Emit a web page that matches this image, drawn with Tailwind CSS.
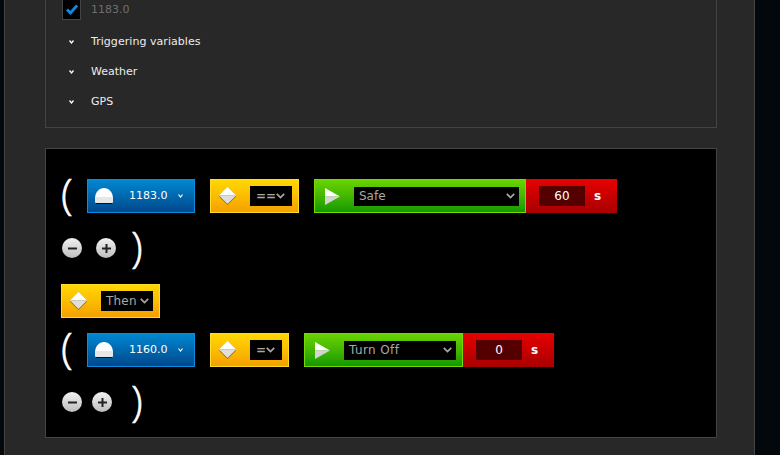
<!DOCTYPE html>
<html lang="en">
<head>
    <meta charset="UTF-8">
    <title>Rule editor</title>
    <script src="https://cdn.jsdelivr.net/npm/@tailwindcss/browser@4"></script>
</head>
<body class="bg-[#03080c] h-[455px] w-[780px] overflow-hidden font-['DejaVu_Sans',sans-serif] text-[11px]">
    <div class="ml-[4px] w-[751px] h-[455px] bg-[#282828] border-x border-[#444444] pl-[40px] overflow-hidden">

        <!-- Variables list -->
        <div class="w-[672px] h-[128px] border border-t-0 border-[#444444] pl-[16px]">
            <div class="h-[27px] flex items-start">
                <div class="w-[19px] h-[20px] bg-black border border-[#444444] border-t-0 flex items-center justify-center">
                    <svg width="12" height="11" viewBox="0 0 12 11"><path d="M1 5.5 L4.5 9 L11 1.5" fill="none" stroke="#0f8ae0" stroke-width="2.8"/></svg>
                </div>
                <span class="ml-[10px] mt-[2px] text-[#6f6f6f]">1183.0</span>
            </div>
            <div class="h-[30px] flex items-center text-[#ececec]">
                <svg class="ml-[7px] mr-[17px]" width="5" height="4" viewBox="0 0 5 4"><path d="M0.5 0.5 L2.5 3 L4.5 0.5" fill="none" stroke="#fff" stroke-width="1.3"/></svg>
                <span class="tracking-[0.05px]">Triggering variables</span>
            </div>
            <div class="h-[30px] flex items-center text-[#ececec]">
                <svg class="ml-[7px] mr-[17px]" width="5" height="4" viewBox="0 0 5 4"><path d="M0.5 0.5 L2.5 3 L4.5 0.5" fill="none" stroke="#fff" stroke-width="1.3"/></svg>
                <span>Weather</span>
            </div>
            <div class="h-[30px] flex items-center text-[#ececec]">
                <svg class="ml-[7px] mr-[17px]" width="5" height="4" viewBox="0 0 5 4"><path d="M0.5 0.5 L2.5 3 L4.5 0.5" fill="none" stroke="#fff" stroke-width="1.3"/></svg>
                <span>GPS</span>
            </div>
        </div>

        <!-- Rule canvas -->
        <div class="mt-[20px] w-[672px] h-[290px] bg-black border border-[#444444] pl-[15px] pt-[30px]">

            <!-- Condition 1 -->
            <div class="flex items-center h-[34px]">
                <span class="w-[26px] -translate-y-[3px] font-['Open_Sans',sans-serif] font-light text-[43px] leading-[34px] text-white [-webkit-text-stroke:0.6px_white]">(</span>
                <div class="w-[108px] h-[34px] border border-[#0a8ce0] bg-gradient-to-b from-[#0088d2] to-[#00488c] flex items-center text-white">
                    <svg class="ml-[7px]" width="18" height="17" viewBox="0 0 18 17"><path d="M0 11 C0 4 4 0 9 0 C14 0 18 4 18 11 Z" fill="#fff"/><path d="M0 9 H18 V14 Q18 15 17 15 H1 Q0 15 0 14 Z" fill="#e6e6e6"/><path d="M1 15.5 H17" stroke="#111" stroke-width="1"/></svg>
                    <span class="ml-[16px]">1183.0</span>
                    <svg class="ml-[10px]" width="5" height="4" viewBox="0 0 5 4"><path d="M0.5 0.5 L2.5 3 L4.5 0.5" fill="none" stroke="#fff" stroke-width="1.2"/></svg>
                </div>
                <div class="ml-[15px] w-[89px] h-[34px] border border-[#ffdc28] bg-gradient-to-b from-[#ffd800] to-[#f5a000] flex items-center">
                    <svg class="ml-[8px]" width="17" height="18" viewBox="0 0 17 18"><path d="M8.5 1 L17 9.5 L8.5 18 L0 9.5 Z" fill="#8a6a10"/><path d="M8.5 0 L17 8.5 H0 Z" fill="#fff"/><path d="M0 8.5 H17 L8.5 17 Z" fill="#dedede"/></svg>
                    <div class="ml-[14px] w-[42px] h-[20px] bg-black text-[#a8a8a8] font-bold flex items-center pl-[6px] text-[12px]">
                        <span class="w-[19px]">==</span>
                        <svg class="ml-[1px]" width="9" height="6" viewBox="0 0 9 6"><path d="M0.8 0.8 L4.5 4.5 L8.2 0.8" fill="none" stroke="#a8a8a8" stroke-width="1.7"/></svg>
                    </div>
                </div>
                <div class="ml-[15px] w-[212px] h-[34px] border border-[#78d800] bg-gradient-to-b from-[#68d400] to-[#0a9a00] flex items-center">
                    <svg class="ml-[10px]" width="15" height="17" viewBox="0 0 15 17"><path d="M0 0 L15 8.5 H0 Z" fill="#fff"/><path d="M0 8.5 H15 L0 17 Z" fill="#d4d4d4"/></svg>
                    <div class="ml-[14px] w-[165px] h-[19px] bg-black text-[#a8a8a8] flex items-center justify-between pl-[5px] pr-[4px] text-[12px]">
                        <span>Safe</span>
                        <svg width="9" height="6" viewBox="0 0 9 6"><path d="M0.8 0.8 L4.5 4.5 L8.2 0.8" fill="none" stroke="#a8a8a8" stroke-width="1.7"/></svg>
                    </div>
                </div>
                <div class="w-[91px] h-[34px] bg-gradient-to-b from-[#e80000] to-[#a80000] flex items-center text-white">
                    <div class="ml-[13px] w-[46px] h-[20px] bg-[#550000] flex items-center justify-center text-[12px]">60</div>
                    <span class="ml-[9px] font-bold text-[12px]">s</span>
                </div>
            </div>

            <div class="flex items-center h-[40px] mt-[15px] pl-[1px]">
                <div class="w-[20px] h-[20px] rounded-full bg-gradient-to-b from-[#f2f2f2] to-[#bdbdbd] flex items-center justify-center">
                    <svg width="11" height="11" viewBox="0 0 11 11"><path d="M1 5.5 H10" stroke="#222" stroke-width="2"/></svg>
                </div>
                <div class="ml-[14px] w-[20px] h-[20px] rounded-full bg-gradient-to-b from-[#f2f2f2] to-[#bdbdbd] flex items-center justify-center">
                    <svg width="11" height="11" viewBox="0 0 11 11"><path d="M1 5.5 H10 M5.5 1 V10" stroke="#222" stroke-width="2"/></svg>
                </div>
                <span class="ml-[15px] -translate-y-[2px] font-['Open_Sans',sans-serif] font-light text-[43px] leading-[34px] text-white [-webkit-text-stroke:0.6px_white]">)</span>
            </div>

            <!-- Joiner -->
            <div class="mt-[16px] w-[99px] h-[34px] border border-[#ffdc28] bg-gradient-to-b from-[#ffd800] to-[#f5a000] flex items-center">
                <svg class="ml-[8px]" width="17" height="18" viewBox="0 0 17 18"><path d="M8.5 1 L17 9.5 L8.5 18 L0 9.5 Z" fill="#8a6a10"/><path d="M8.5 0 L17 8.5 H0 Z" fill="#fff"/><path d="M0 8.5 H17 L8.5 17 Z" fill="#dedede"/></svg>
                <div class="ml-[14px] w-[52px] h-[20px] bg-black text-[#a8a8a8] flex items-center pl-[5px] text-[12px]">
                    <span class="tracking-[0.2px]">Then</span>
                    <svg class="ml-[3px]" width="9" height="6" viewBox="0 0 9 6"><path d="M0.8 0.8 L4.5 4.5 L8.2 0.8" fill="none" stroke="#a8a8a8" stroke-width="1.7"/></svg>
                </div>
            </div>

            <!-- Condition 2 -->
            <div class="flex items-center h-[34px] mt-[15px]">
                <span class="w-[26px] -translate-y-[3px] font-['Open_Sans',sans-serif] font-light text-[43px] leading-[34px] text-white [-webkit-text-stroke:0.6px_white]">(</span>
                <div class="w-[108px] h-[34px] border border-[#0a8ce0] bg-gradient-to-b from-[#0088d2] to-[#00488c] flex items-center text-white">
                    <svg class="ml-[7px]" width="18" height="17" viewBox="0 0 18 17"><path d="M0 11 C0 4 4 0 9 0 C14 0 18 4 18 11 Z" fill="#fff"/><path d="M0 9 H18 V14 Q18 15 17 15 H1 Q0 15 0 14 Z" fill="#e6e6e6"/><path d="M1 15.5 H17" stroke="#111" stroke-width="1"/></svg>
                    <span class="ml-[16px]">1160.0</span>
                    <svg class="ml-[10px]" width="5" height="4" viewBox="0 0 5 4"><path d="M0.5 0.5 L2.5 3 L4.5 0.5" fill="none" stroke="#fff" stroke-width="1.2"/></svg>
                </div>
                <div class="ml-[15px] w-[79px] h-[34px] border border-[#ffdc28] bg-gradient-to-b from-[#ffd800] to-[#f5a000] flex items-center">
                    <svg class="ml-[8px]" width="17" height="18" viewBox="0 0 17 18"><path d="M8.5 1 L17 9.5 L8.5 18 L0 9.5 Z" fill="#8a6a10"/><path d="M8.5 0 L17 8.5 H0 Z" fill="#fff"/><path d="M0 8.5 H17 L8.5 17 Z" fill="#dedede"/></svg>
                    <div class="ml-[14px] w-[32px] h-[20px] bg-black text-[#a8a8a8] font-bold flex items-center pl-[6px] text-[12px]">
                        <span class="w-[9px]">=</span>
                        <svg class="ml-[1px]" width="9" height="6" viewBox="0 0 9 6"><path d="M0.8 0.8 L4.5 4.5 L8.2 0.8" fill="none" stroke="#a8a8a8" stroke-width="1.7"/></svg>
                    </div>
                </div>
                <div class="ml-[15px] w-[159px] h-[34px] border border-[#78d800] bg-gradient-to-b from-[#68d400] to-[#0a9a00] flex items-center">
                    <svg class="ml-[10px]" width="15" height="17" viewBox="0 0 15 17"><path d="M0 0 L15 8.5 H0 Z" fill="#fff"/><path d="M0 8.5 H15 L0 17 Z" fill="#d4d4d4"/></svg>
                    <div class="ml-[14px] w-[112px] h-[19px] bg-black text-[#a8a8a8] flex items-center justify-between pl-[5px] pr-[4px] text-[12px]">
                        <span class="tracking-[0.4px]">Turn Off</span>
                        <svg width="9" height="6" viewBox="0 0 9 6"><path d="M0.8 0.8 L4.5 4.5 L8.2 0.8" fill="none" stroke="#a8a8a8" stroke-width="1.7"/></svg>
                    </div>
                </div>
                <div class="w-[91px] h-[34px] bg-gradient-to-b from-[#e80000] to-[#a80000] flex items-center text-white">
                    <div class="ml-[13px] w-[46px] h-[20px] bg-[#550000] flex items-center justify-center text-[12px]">0</div>
                    <span class="ml-[9px] font-bold text-[12px]">s</span>
                </div>
            </div>

            <div class="flex items-center h-[40px] mt-[15px] pl-[1px]">
                <div class="w-[20px] h-[20px] rounded-full bg-gradient-to-b from-[#f2f2f2] to-[#bdbdbd] flex items-center justify-center">
                    <svg width="11" height="11" viewBox="0 0 11 11"><path d="M1 5.5 H10" stroke="#222" stroke-width="2"/></svg>
                </div>
                <div class="ml-[10px] w-[20px] h-[20px] rounded-full bg-gradient-to-b from-[#f2f2f2] to-[#bdbdbd] flex items-center justify-center">
                    <svg width="11" height="11" viewBox="0 0 11 11"><path d="M1 5.5 H10 M5.5 1 V10" stroke="#222" stroke-width="2"/></svg>
                </div>
                <span class="ml-[19px] -translate-y-[2px] font-['Open_Sans',sans-serif] font-light text-[43px] leading-[34px] text-white [-webkit-text-stroke:0.6px_white]">)</span>
            </div>
        </div>
    </div>
</body>
</html>
